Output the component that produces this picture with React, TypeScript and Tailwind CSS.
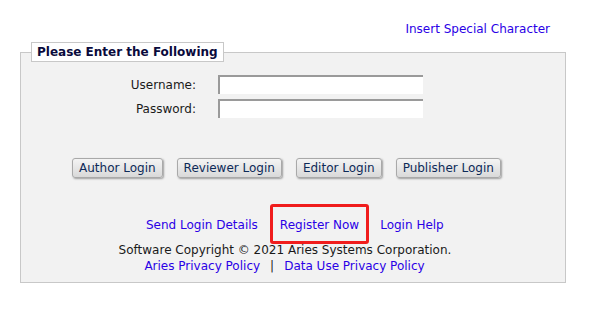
import React from "react";

const LINK = "text-[#2a00e6] hover:underline";

function LoginButton({ label }: { label: string }) {
  return (
    <button
      type="button"
      className="h-[20px] rounded-[3px] border border-[#a9a9a9] bg-gradient-to-b from-[#f4f4f4] to-[#d9d9d9] px-[6px] text-[12px] leading-[18px] text-[#0d2a58] shadow-[1px_1px_2px_rgba(0,0,0,0.35)]"
    >
      {label}
    </button>
  );
}

export default function App() {
  return (
    <div className="min-h-[313px] w-[601px] bg-white font-['DejaVu_Sans',Verdana,sans-serif] text-[12px] text-[#1a1a1a]">
      <div className="flex justify-end pr-[51px] pt-[21px] leading-[16px]">
        <a href="#" className={LINK}>Insert Special Character</a>
      </div>

      <fieldset className="mx-[20px] mt-[5px] w-[546px] border border-[#c8c8c8] bg-[#f2f2f2] px-0 pb-[8px]">
        <legend className="ml-[10px] border border-[#c8c8c8] bg-white px-[5px] text-[12px] font-bold leading-[18px] text-[#0a0a3c]">
          Please Enter the Following
        </legend>

        <div className="mt-[13px] grid grid-cols-[175px_205px] gap-x-[22px] gap-y-[5px]">
          <label className="self-center text-right">Username:</label>
          <input className="h-[19px] border-l-2 border-t-2 border-[#9a9a9a] bg-white px-1 text-[12px] outline-none" />
          <label className="self-center text-right">Password:</label>
          <input type="password" className="h-[19px] border-l-2 border-t-2 border-[#9a9a9a] bg-white px-1 text-[12px] outline-none" />
        </div>

        <div className="mt-[40px] flex gap-[14px] pl-[51px]">
          <LoginButton label="Author Login" />
          <LoginButton label="Reviewer Login" />
          <LoginButton label="Editor Login" />
          <LoginButton label="Publisher Login" />
        </div>

        <div className="mt-[26px] flex items-center pl-[125px]">
          <a href="#" className={`${LINK} pt-[1px]`}>Send Login Details</a>
          <div className="ml-[12px] flex h-[40px] items-center rounded-[3px] border-[3px] border-[#f01d1d] px-[7px] pt-[1px]">
            <a href="#" className={LINK}>Register Now</a>
          </div>
          <a href="#" className={`${LINK} ml-[11px] pt-[1px]`}>Login Help</a>
        </div>

        <div className="-mt-[2px] text-center leading-[16px]">
          <div className="pr-[16px]">Software Copyright © 2021 Aries Systems Corporation.</div>
          <div className="pr-[17px]">
            <a href="#" className={LINK}>Aries Privacy Policy</a>
            <span className="mx-[10px]">|</span>
            <a href="#" className={LINK}>Data Use Privacy Policy</a>
          </div>
        </div>
      </fieldset>
    </div>
  );
}
